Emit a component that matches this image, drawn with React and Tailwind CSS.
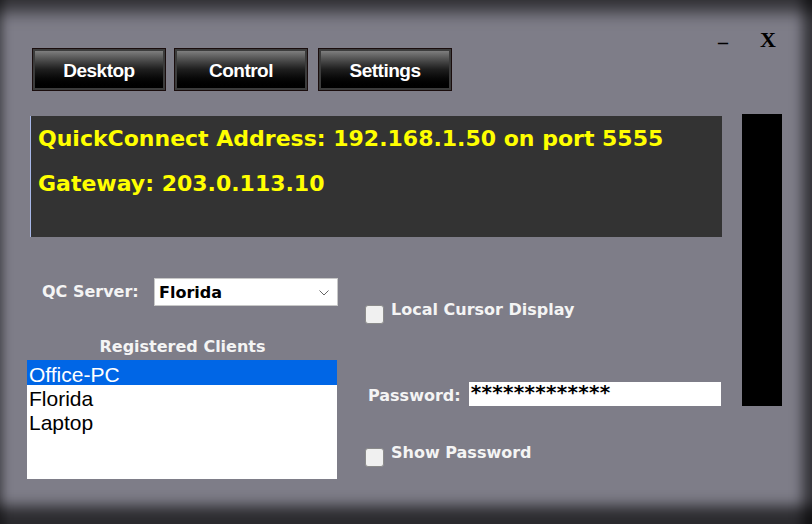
import React, { useState } from 'react';

const labelFont = "font-['DejaVu_Sans','Verdana',sans-serif]";

function NavButton({ label }) {
  return (
    <button className="w-[134px] h-[43px] pt-[3px] border border-[#1a0d0d] bg-gradient-to-b from-[#8a8a8a] via-[#1e1e1e] to-black shadow-[inset_0_0_0_2px_#3c3c3c] text-white font-bold text-[19px] font-['Liberation_Sans_Narrow','Liberation_Sans',Arial,sans-serif] tracking-[-0.5px]">
      {label}
    </button>
  );
}

function CheckRow({ label, checked, onChange }) {
  return (
    <label className="flex items-start gap-[7px] cursor-pointer">
      <span onClick={onChange} className="mt-[6px] w-[19px] h-[19px] rounded-[3px] border border-[#8a8a8a] bg-[#f0f0f0] flex items-center justify-center text-[12px] text-black">
        {checked ? '✓' : ''}
      </span>
      <span className={`${labelFont} font-bold text-[16px] text-[#f4f4f4] leading-[20px] mt-[1px]`}>{label}</span>
    </label>
  );
}

export default function App() {
  const [selected, setSelected] = useState(0);
  const [localCursor, setLocalCursor] = useState(false);
  const [showPassword, setShowPassword] = useState(false);
  const clients = ['Office-PC', 'Florida', 'Laptop'];

  return (
    <div className="w-[812px] h-[524px] bg-[#7e7d88] overflow-hidden flex flex-col pl-[27px] pt-[30px] shadow-[inset_0_24px_16px_-12px_rgba(0,0,0,0.6),inset_10px_0_8px_-6px_rgba(0,0,0,0.35),inset_-20px_0_12px_-10px_rgba(0,0,0,0.55),inset_0_-28px_14px_-10px_rgba(0,0,0,0.65)]">
      {/* header */}
      <div className="flex items-start">
        <div className="flex gap-[8px] ml-[5px] mt-[18px]">
          <NavButton label="Desktop" />
          <NavButton label="Control" />
          <div className="ml-[2px]"><NavButton label="Settings" /></div>
        </div>
        <div className="ml-auto mr-[36px] flex items-start gap-[32px] font-['Liberation_Serif',serif] font-bold text-black">
          <span className="text-[20px] leading-[20px] mt-[2px]">–</span>
          <span className="text-[22px] leading-[20px]">X</span>
        </div>
      </div>

      {/* body */}
      <div className="flex items-start mt-[23px]">
        <div className="w-[695px] flex flex-col">
          <div className={`ml-[3px] mt-[2px] w-[692px] h-[121px] bg-[#333333] border-l border-[#a8b8e8] pl-[7px] pt-[10px] ${labelFont} font-bold text-[22px] text-[#ffff00] leading-[26px]`}>
            <div>QuickConnect Address: 192.168.1.50 on port 5555</div>
            <div className="mt-[19px]">Gateway: 203.0.113.10</div>
          </div>

          <div className="flex">
            {/* left column */}
            <div className="w-[311px] flex flex-col">
              <div className="flex items-center mt-[41px] h-[28px]">
                <span className={`ml-[15px] ${labelFont} font-bold text-[16px] text-[#f4f4f4]`}>QC Server:</span>
                <div className="ml-auto w-[184px] h-[28px] bg-white border border-[#c8c8c8] flex items-center pl-[4px] pr-[8px] pt-[2px]">
                  <span className={`${labelFont} font-bold text-[16px] text-black`}>Florida</span>
                  <svg className="ml-auto" width="10" height="6" viewBox="0 0 10 6" fill="none">
                    <path d="M0.5 0.5 L5 5 L9.5 0.5" stroke="#666" strokeWidth="1" />
                  </svg>
                </div>
              </div>
              <div className={`mt-[29px] h-[20px] text-center ${labelFont} font-bold text-[16px] text-[#f4f4f4]`}>Registered Clients</div>
              <div className="mt-[5px] w-[310px] h-[119px] bg-white font-['Liberation_Sans',Arial,sans-serif] text-[21px] pt-[0px]">
                {clients.map((c, i) => (
                  <div
                    key={c}
                    onClick={() => setSelected(i)}
                    className={`pl-[2px] cursor-default ${i === 0 ? 'h-[25px] leading-[30px]' : 'h-[24px] leading-[28px]'} ${selected === i ? 'bg-[#0066e6] text-white' : 'text-black'}`}
                  >
                    {c}
                  </div>
                ))}
              </div>
            </div>

            {/* right column */}
            <div className="ml-[27px] flex flex-col flex-1">
              <div className="mt-[62px]">
                <CheckRow label="Local Cursor Display" checked={localCursor} onChange={() => setLocalCursor(!localCursor)} />
              </div>
              <div className="flex items-center mt-[58px] h-[24px]">
                <span className={`ml-[3px] mt-[4px] ${labelFont} font-bold text-[16px] text-[#f4f4f4]`}>Password:</span>
                <div className="ml-[8px] w-[252px] h-[24px] bg-white flex items-start pl-[2px]">
                  <span className="font-['DejaVu_Sans',sans-serif] font-bold text-[20px] leading-[20px] text-black tracking-[0.3px]">
                    {showPassword ? 'qcpassword123' : '*************'}
                  </span>
                </div>
              </div>
              <div className="mt-[36px]">
                <CheckRow label="Show Password" checked={showPassword} onChange={() => setShowPassword(!showPassword)} />
              </div>
            </div>
          </div>
        </div>

        <div className="ml-[20px] w-[40px] h-[292px] bg-black" />
      </div>
    </div>
  );
}
